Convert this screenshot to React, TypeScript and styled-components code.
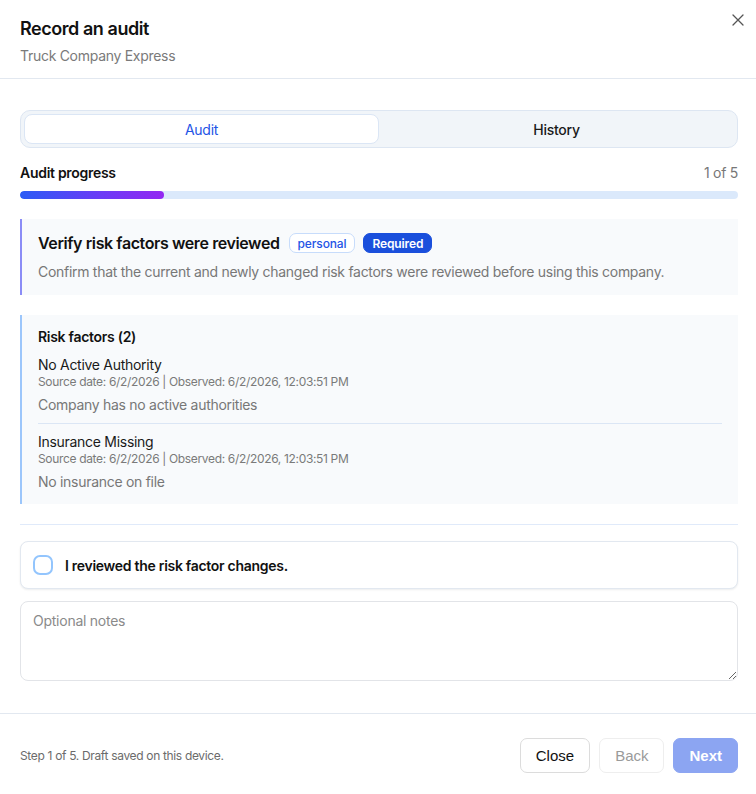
import React, { useState } from "react";
import styled, { createGlobalStyle } from "styled-components";

const GlobalStyle = createGlobalStyle`
  * { box-sizing: border-box; }
  body {
    margin: 0;
    background: #fff;
    font-family: Inter, "Noto Sans", sans-serif;
    letter-spacing: -0.018em;
    color: #111;
  }
`;

const Modal = styled.div`
  width: 756px;
  min-height: 794px;
  background: #fff;
  display: flex;
  flex-direction: column;
`;

const Header = styled.header`
  position: relative;
  padding: 17px 20px 12px;
  border-bottom: 1px solid #e2e8f0;
`;

const Title = styled.h2`
  margin: 0 0 5px;
  font-size: 18px;
  line-height: 24px;
  font-weight: 600;
  letter-spacing: -0.025em;
`;

const Subtitle = styled.p`
  margin: 0;
  font-size: 14px;
  line-height: 20px;
  color: #7a7a7a;
`;

const CloseIcon = styled.button`
  position: absolute;
  top: 14px;
  right: 12px;
  width: 12px;
  height: 12px;
  padding: 0;
  border: none;
  background: none;
  cursor: pointer;
  display: flex;
`;

const Body = styled.div`
  padding: 31px 18px 32px 20px;
  display: flex;
  flex-direction: column;
`;

const Tabs = styled.div`
  display: grid;
  grid-template-columns: 1fr 1fr;
  padding: 3px;
  background: #f1f5f9;
  border: 1px solid #dde6f2;
  border-radius: 10px;
`;

const Tab = styled.button<{ $active?: boolean }>`
  height: 30px;
  font-family: Inter, sans-serif;
  letter-spacing: -0.018em;
  font-size: 14px;
  border-radius: 8px;
  border: 1px solid ${(p) => (p.$active ? "#dbe6f5" : "transparent")};
  background: ${(p) => (p.$active ? "#fff" : "transparent")};
  color: ${(p) => (p.$active ? "#2454e6" : "#1a1a1a")};
  font-weight: ${(p) => (p.$active ? 400 : 500)};
  cursor: pointer;
`;

const ProgressRow = styled.div`
  margin-top: 16px;
  display: flex;
  justify-content: space-between;
  align-items: center;
  font-size: 14px;
  line-height: 18px;
`;

const ProgressLabel = styled.span`
  font-weight: 600;
`;

const ProgressCount = styled.span`
  color: #777;
`;

const Track = styled.div`
  margin-top: 9px;
  height: 8px;
  background: #dbe9fb;
  border-radius: 999px;
  overflow: hidden;
`;

const Fill = styled.div`
  height: 100%;
  border-radius: 999px;
  background: linear-gradient(90deg, #2a5cf5 0%, #6a3cf6 55%, #9327f2 100%);
`;

const Card = styled.section<{ $accent: string }>`
  margin-top: 20px;
  background: #f8fafc;
  border-left: 2px solid ${(p) => p.$accent};
`;

const StepCard = styled(Card)`
  padding: 13px 16px 13px 16px;
`;

const StepTitleRow = styled.div`
  display: flex;
  align-items: center;
  gap: 8px;
`;

const StepTitle = styled.h3`
  margin: 0 1px 0 0;
  font-size: 16px;
  line-height: 22px;
  font-weight: 600;
  letter-spacing: -0.025em;
`;

const Badge = styled.span<{ $solid?: boolean }>`
  display: inline-flex;
  align-items: center;
  height: 20px;
  padding: 0 8px;
  border-radius: 7px;
  font-size: 12px;
  letter-spacing: -0.01em;
  font-weight: ${(p) => (p.$solid ? 600 : 500)};
  background: ${(p) => (p.$solid ? "#1a4fdc" : "#fff")};
  color: ${(p) => (p.$solid ? "#fff" : "#2454e6")};
  border: 1px solid ${(p) => (p.$solid ? "#1a4fdc" : "#c7dcfb")};
`;

const StepDesc = styled.p`
  margin: 8px 0 0;
  font-size: 14px;
  line-height: 20px;
  color: #777;
`;

const RiskCard = styled(Card)`
  padding: 12px 16px 12px 16px;
`;

const RiskHeading = styled.h4`
  margin: 0;
  font-size: 14px;
  line-height: 20px;
  font-weight: 600;
`;

const RiskItem = styled.div<{ $first?: boolean }>`
  padding: ${(p) => (p.$first ? "9px 0 8px" : "9px 0 0")};
  border-bottom: ${(p) => (p.$first ? "1px solid #dbe6f5" : "none")};
`;

const RiskName = styled.div`
  font-size: 14px;
  line-height: 18px;
  color: #1a1a1a;
`;

const RiskMeta = styled.div`
  font-size: 12px;
  line-height: 16px;
  color: #7a7a7a;
  letter-spacing: -0.028em;
`;

const RiskDesc = styled.div`
  margin-top: 5px;
  font-size: 14px;
  line-height: 20px;
  color: #777;
`;

const Divider = styled.hr`
  margin: 20px 0 16px;
  border: none;
  border-top: 1px solid #e0eafa;
`;

const CheckCard = styled.label`
  height: 48px;
  display: flex;
  align-items: center;
  gap: 12px;
  padding: 0 12px;
  background: #fff;
  border: 1px solid #e2e8f0;
  border-radius: 8px;
  box-shadow: 0 1px 2px rgba(15, 23, 42, 0.08);
  cursor: pointer;
  font-size: 14px;
  font-weight: 600;
  color: #111;
`;

const Box = styled.span<{ $checked: boolean }>`
  width: 20px;
  height: 20px;
  border-radius: 7px;
  border: 2px solid #93c5fd;
  background: ${(p) => (p.$checked ? "#2563eb" : "#fff")};
  flex-shrink: 0;
`;

const Notes = styled.textarea`
  margin-top: 12px;
  height: 80px;
  width: 100%;
  padding: 9px 12px;
  border: 1px solid #e2e4e8;
  border-radius: 8px;
  font-family: Inter, sans-serif;
  letter-spacing: -0.018em;
  font-size: 14px;
  line-height: 20px;
  color: #111;
  resize: vertical;
  outline: none;

  &::placeholder {
    color: #8a8a8a;
  }
`;

const Footer = styled.footer`
  border-top: 1px solid #e2e8f0;
  padding: 24px 18px 21px 20px;
  display: flex;
  align-items: center;
  justify-content: space-between;
`;

const FooterNote = styled.span`
  font-size: 12px;
  color: #6b6b6b;
  letter-spacing: -0.028em;
`;

const Actions = styled.div`
  display: flex;
  gap: 9px;
`;

const ActionButton = styled.button<{ $variant?: "primary" | "ghost" }>`
  height: 35px;
  padding: 0 15px;
  border-radius: 7px;
  font-family: "Liberation Sans", Arial, sans-serif;
  letter-spacing: 0;
  font-size: 15px;
  font-weight: ${(p) => (p.$variant === "primary" ? 700 : 400)};
  cursor: pointer;
  border: 1px solid
    ${(p) => (p.$variant === "primary" ? "#8ca5f2" : p.$variant === "ghost" ? "#eeeeee" : "#dcdcdc")};
  background: ${(p) => (p.$variant === "primary" ? "#8ca5f2" : "#fff")};
  color: ${(p) => (p.$variant === "primary" ? "#fff" : p.$variant === "ghost" ? "#9a9a9a" : "#111")};
`;

const risks = [
  { name: "No Active Authority", desc: "Company has no active authorities" },
  { name: "Insurance Missing", desc: "No insurance on file" },
];

export default function App() {
  const [tab, setTab] = useState<"audit" | "history">("audit");
  const [checked, setChecked] = useState(false);
  const [notes, setNotes] = useState("");

  return (
    <Modal>
      <GlobalStyle />
      <Header>
        <Title>Record an audit</Title>
        <Subtitle>Truck Company Express</Subtitle>
        <CloseIcon aria-label="Close">
          <svg width="12" height="12" viewBox="0 0 12 12">
            <path d="M1 1L11 11M11 1L1 11" stroke="#555" strokeWidth="1.3" strokeLinecap="round" />
          </svg>
        </CloseIcon>
      </Header>

      <Body>
        <Tabs>
          <Tab $active={tab === "audit"} onClick={() => setTab("audit")}>
            Audit
          </Tab>
          <Tab $active={tab === "history"} onClick={() => setTab("history")}>
            History
          </Tab>
        </Tabs>

        <ProgressRow>
          <ProgressLabel>Audit progress</ProgressLabel>
          <ProgressCount>1 of 5</ProgressCount>
        </ProgressRow>
        <Track>
          <Fill style={{ width: `${(1 / 5) * 100}%` }} />
        </Track>

        <StepCard $accent="#8b8cf6">
          <StepTitleRow>
            <StepTitle>Verify risk factors were reviewed</StepTitle>
            <Badge>personal</Badge>
            <Badge $solid>Required</Badge>
          </StepTitleRow>
          <StepDesc>
            Confirm that the current and newly changed risk factors were reviewed before using this company.
          </StepDesc>
        </StepCard>

        <RiskCard $accent="#9cc6fb">
          <RiskHeading>Risk factors (2)</RiskHeading>
          {risks.map((r, i) => (
            <RiskItem key={r.name} $first={i === 0}>
              <RiskName>{r.name}</RiskName>
              <RiskMeta>Source date: 6/2/2026 | Observed: 6/2/2026, 12:03:51 PM</RiskMeta>
              <RiskDesc>{r.desc}</RiskDesc>
            </RiskItem>
          ))}
        </RiskCard>

        <Divider />

        <CheckCard onClick={() => setChecked((c) => !c)}>
          <Box $checked={checked} />
          I reviewed the risk factor changes.
        </CheckCard>

        <Notes placeholder="Optional notes" value={notes} onChange={(e) => setNotes(e.target.value)} />
      </Body>

      <Footer>
        <FooterNote>Step 1 of 5. Draft saved on this device.</FooterNote>
        <Actions>
          <ActionButton>Close</ActionButton>
          <ActionButton $variant="ghost" disabled>
            Back
          </ActionButton>
          <ActionButton $variant="primary" disabled>
            Next
          </ActionButton>
        </Actions>
      </Footer>
    </Modal>
  );
}
